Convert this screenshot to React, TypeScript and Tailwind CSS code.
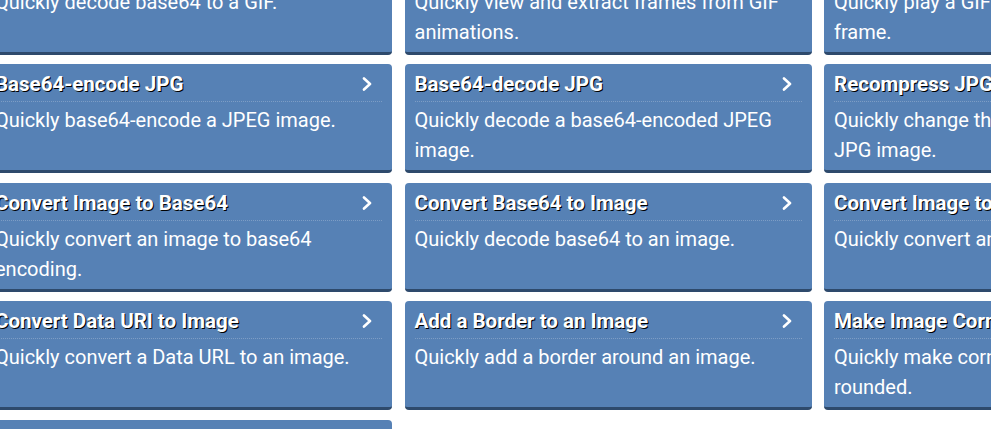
type Tool = { title: string; desc: string }

const tools: Tool[] = [
  { title: 'Base64-decode GIF', desc: 'Quickly decode base64 to a GIF.' },
  { title: 'Extract GIF Frames', desc: 'Quickly view and extract frames from GIF animations.' },
  { title: 'Play GIF Frame by Frame', desc: 'Quickly play a GIF animation frame by frame.' },
  { title: 'Base64-encode JPG', desc: 'Quickly base64-encode a JPEG image.' },
  { title: 'Base64-decode JPG', desc: 'Quickly decode a base64-encoded JPEG image.' },
  { title: 'Recompress JPG', desc: 'Quickly change the compression quality of JPG image.' },
  { title: 'Convert Image to Base64', desc: 'Quickly convert an image to base64 encoding.' },
  { title: 'Convert Base64 to Image', desc: 'Quickly decode base64 to an image.' },
  { title: 'Convert Image to Data URI', desc: 'Quickly convert an image to a Data URL.' },
  { title: 'Convert Data URI to Image', desc: 'Quickly convert a Data URL to an image.' },
  { title: 'Add a Border to an Image', desc: 'Quickly add a border around an image.' },
  { title: 'Make Image Corners Rounded', desc: 'Quickly make corners of an image or photo rounded.' },
  { title: 'Add a Shadow to an Image', desc: 'Quickly add a drop shadow to an image.' },
]

function Chevron() {
  return (
    <svg width="10" height="14" viewBox="0 0 10 14" className="mr-[10px] shrink-0">
      <polyline points="2,1.5 8,7 2,12.5" fill="none" stroke="white" strokeWidth="2.6" strokeLinecap="round" strokeLinejoin="round" />
    </svg>
  )
}

function ToolCard({ tool }: { tool: Tool }) {
  return (
    <a
      href="#"
      className="flex h-[109px] flex-col rounded-[4px] border-b-[3px] border-[#2e4a6c] bg-[#5681b5] px-[10px] text-white"
    >
      <div className="flex items-center justify-between border-b border-dotted border-[#7d9dc5] pt-[7px] pb-[4px]">
        <span className="whitespace-nowrap text-[20.5px] font-bold leading-[26px] [text-shadow:1px_1px_0_#000]">
          {tool.title}
        </span>
        <Chevron />
      </div>
      <p className="pt-[3px] text-[20px] leading-[30px]">{tool.desc}</p>
    </a>
  )
}

export default function App() {
  return (
    <div className="h-[429px] w-[991px] overflow-hidden bg-white font-['Roboto',sans-serif]">
      <div className="-mt-[54.5px] -ml-[15px] grid grid-cols-[repeat(3,407px)] gap-x-[12.5px] gap-y-[9.5px]">
        {tools.map(t => (
          <ToolCard key={t.title} tool={t} />
        ))}
      </div>
    </div>
  )
}
